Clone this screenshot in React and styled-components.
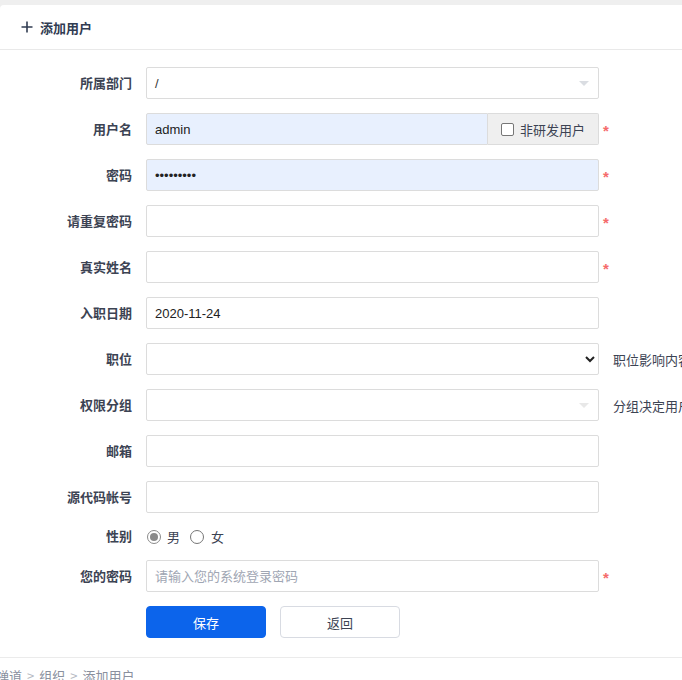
import styled, { createGlobalStyle } from 'styled-components'

const Global = createGlobalStyle`
  html, body {
    margin: 0;
    padding: 0;
    background: #efefef;
    overflow: hidden;
  }
  body {
    font-family: "Liberation Sans", "Noto Sans CJK SC", sans-serif;
    font-size: 13px;
    color: #3c4353;
  }
  * { box-sizing: border-box; }
`

const Panel = styled.div`
  margin-top: 5px;
  width: 720px;
  background: #fff;
  border-top-left-radius: 4px;
  height: 700px;
`

const Header = styled.div`
  height: 45px;
  display: flex;
  align-items: center;
  padding-left: 21px;
  gap: 7px;
  border-bottom: 1px solid #e9e9e9;
  font-weight: bold;
  font-size: 13px;
  color: #313c52;
`

const Form = styled.div`
  padding-top: 17px;
  display: grid;
  grid-template-columns: 132px 453px auto;
  column-gap: 14px;
  row-gap: 14px;
  align-items: center;
`

const Label = styled.div`
  text-align: right;
  font-weight: bold;
  color: #3c4353;
  white-space: nowrap;
  margin-top: -2px;
`

const Field = styled.div`
  position: relative;
  height: ${(p) => (p.$short ? '19px' : '32px')};
  display: flex;
  align-items: center;
`

const Input = styled.input`
  height: 32px;
  width: 100%;
  border: 1px solid #dcdcdc;
  border-radius: ${(p) => (p.$joined ? '2px 0 0 2px' : '2px')};
  background: ${(p) => (p.$auto ? '#e8f0fe' : '#fff')};
  padding: 0 8px;
  font-family: "Liberation Sans", "Noto Sans CJK SC", sans-serif;
  font-size: 13px;
  color: #222;
  outline: none;
  flex: 1;
  &::placeholder { color: #a0a6b3; }
`

const Chosen = styled.div`
  height: 32px;
  width: 100%;
  border: 1px solid #dcdcdc;
  border-radius: 2px;
  background: #fff;
  padding: 0 8px;
  display: flex;
  align-items: center;
  color: #333;
  &::after {
    content: '';
    position: absolute;
    right: 10px;
    top: 14px;
    border-left: 5px solid transparent;
    border-right: 5px solid transparent;
    border-top: 5px solid ${(p) => (p.$faint ? '#e8e8e8' : '#dadde2')};
  }
`

const Select = styled.select`
  height: 32px;
  width: 100%;
  border: 1px solid #dcdcdc;
  border-radius: 2px;
  background: #fff;
  padding: 0 6px;
  font-size: 13px;
  color: #222;
  outline: none;
`

const Addon = styled.label`
  height: 32px;
  width: 111px;
  display: flex;
  align-items: center;
  gap: 6px;
  padding-left: 13px;
  background: #efefef;
  border: 1px solid #dcdcdc;
  border-left: none;
  border-radius: 0 2px 2px 0;
  color: #3c4353;
  font-family: "Noto Sans CJK SC", sans-serif;
`

const Box = styled.span`
  width: 13px;
  height: 13px;
  border: 1px solid #767676;
  border-radius: 2px;
  background: #fff;
`

const Star = styled.span`
  color: #f56b6b;
  font-size: 15px;
  font-weight: bold;
  margin-left: -10px;
  align-self: center;
  padding-top: 3px;
`

const Help = styled.div`
  white-space: nowrap;
  color: #3c4353;
  font-family: "Noto Sans CJK SC", sans-serif;
`

const Radios = styled.div`
  display: flex;
  align-items: center;
  gap: 6px;
  padding-left: 1px;
`

const Radio = styled.span`
  width: 14px;
  height: 14px;
  border-radius: 50%;
  border: 1px solid ${(p) => (p.$on ? '#8a8a8a' : '#767676')};
  display: inline-flex;
  align-items: center;
  justify-content: center;
  margin-left: ${(p) => (p.$gap ? '4px' : '0')};
  margin-right: ${(p) => (p.$gap ? '1px' : '0')};
  &::after {
    content: '';
    width: 8px;
    height: 8px;
    border-radius: 50%;
    background: ${(p) => (p.$on ? '#8a8a8a' : 'transparent')};
  }
`

const Buttons = styled.div`
  display: flex;
  gap: 14px;
`

const Button = styled.button`
  width: 120px;
  height: 32px;
  border-radius: 4px;
  font-family: "Noto Sans CJK SC", sans-serif;
  font-size: 13px;
  border: 1px solid ${(p) => (p.$primary ? '#0c64eb' : '#d8dbe2')};
  background: ${(p) => (p.$primary ? '#0c64eb' : '#fff')};
  color: ${(p) => (p.$primary ? '#fff' : '#3c4353')};
`

const Footer = styled.div`
  margin-top: 19px;
  border-top: 1px solid #ebebeb;
  padding-top: 8px;
  margin-left: -4px;
  color: #8a909e;
  display: flex;
  gap: 5px;
  font-family: "Noto Sans CJK SC", sans-serif;
`

const Sep = styled.span`
  color: #b5b9c2;
`

const Empty = styled.div``

function Plus() {
  return (
    <svg width="12" height="12" viewBox="0 0 12 12">
      <path d="M6 0.5v11M0.5 6h11" stroke="#313c52" strokeWidth="1.6" />
    </svg>
  )
}

export default function App() {
  return (
    <>
      <Global />
      <Panel>
        <Header>
          <Plus />
          <span>添加用户</span>
        </Header>
        <Form>
          <Label>所属部门</Label>
          <Field><Chosen>/</Chosen></Field>
          <Empty />

          <Label>用户名</Label>
          <Field>
            <Input $auto $joined defaultValue="admin" />
            <Addon><Box />非研发用户</Addon>
          </Field>
          <Star>*</Star>

          <Label>密码</Label>
          <Field><Input $auto type="password" defaultValue="123456789" /></Field>
          <Star>*</Star>

          <Label>请重复密码</Label>
          <Field><Input type="password" /></Field>
          <Star>*</Star>

          <Label>真实姓名</Label>
          <Field><Input /></Field>
          <Star>*</Star>

          <Label>入职日期</Label>
          <Field><Input defaultValue="2020-11-24" /></Field>
          <Empty />

          <Label>职位</Label>
          <Field><Select><option></option></Select></Field>
          <Help>职位影响内容和用户列表的顺序</Help>

          <Label>权限分组</Label>
          <Field><Chosen $faint /></Field>
          <Help>分组决定用户的权限列表</Help>

          <Label>邮箱</Label>
          <Field><Input /></Field>
          <Empty />

          <Label>源代码帐号</Label>
          <Field><Input /></Field>
          <Empty />

          <Label>性别</Label>
          <Field $short>
            <Radios>
              <Radio $on />男
              <Radio $gap />女
            </Radios>
          </Field>
          <Empty />

          <Label>您的密码</Label>
          <Field><Input type="password" placeholder="请输入您的系统登录密码" /></Field>
          <Star>*</Star>

          <Empty />
          <Buttons>
            <Button $primary>保存</Button>
            <Button>返回</Button>
          </Buttons>
          <Empty />
        </Form>
        <Footer>
          <span>禅道</span><Sep>&gt;</Sep><span>组织</span><Sep>&gt;</Sep><span>添加用户</span>
        </Footer>
      </Panel>
    </>
  )
}
